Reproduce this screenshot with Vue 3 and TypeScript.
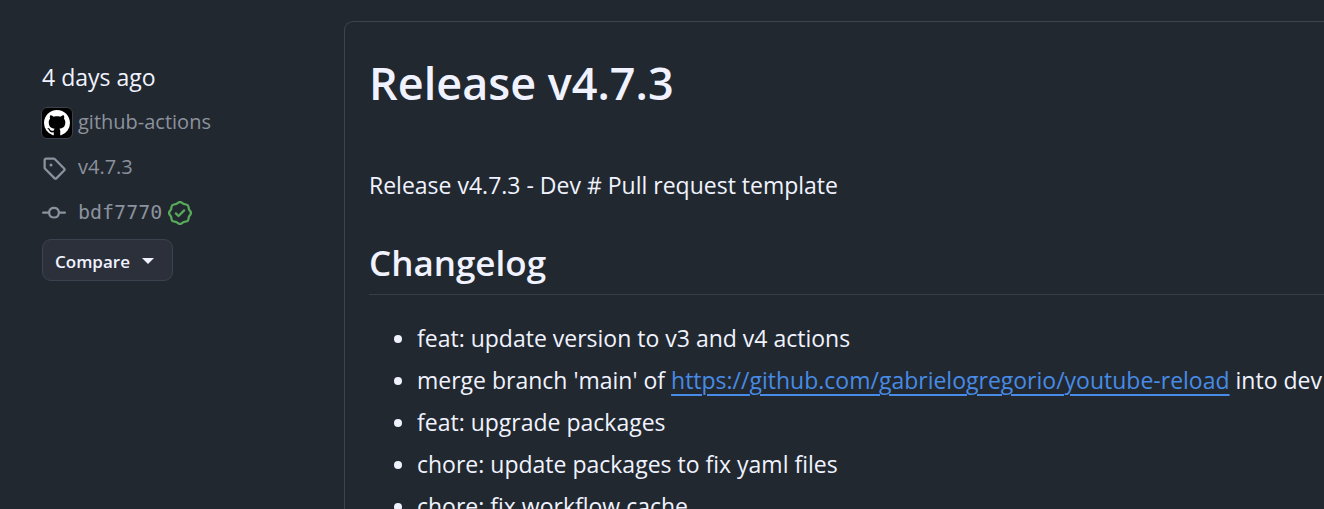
<script setup lang="ts">
interface Change {
  text: string
  link?: string
  after?: string
}

const changes: Change[] = [
  { text: 'feat: update version to v3 and v4 actions' },
  {
    text: "merge branch 'main' of ",
    link: 'https://github.com/gabrielogregorio/youtube-reload',
    after: ' into dev',
  },
  { text: 'feat: upgrade packages' },
  { text: 'chore: update packages to fix yaml files' },
  { text: 'chore: fix workflow cache' },
]
</script>

<template>
  <div class="page">
    <aside class="meta">
      <div class="row date">4 days ago</div>
      <a class="row" href="#author">
        <span class="avatar">
          <svg viewBox="0 0 16 16" width="26" height="26" aria-hidden="true">
            <path d="M8 0c4.42 0 8 3.58 8 8a8.013 8.013 0 0 1-5.45 7.59c-.4.08-.55-.17-.55-.38 0-.27.01-1.13.01-2.2 0-.75-.25-1.23-.54-1.48 1.78-.2 3.65-.88 3.65-3.95 0-.88-.31-1.59-.82-2.15.08-.2.36-1.02-.08-2.12 0 0-.67-.22-2.2.82-.64-.18-1.32-.27-2-.27-.68 0-1.36.09-2 .27-1.53-1.03-2.2-.82-2.2-.82-.44 1.1-.16 1.92-.08 2.12-.51.56-.82 1.28-.82 2.15 0 3.06 1.86 3.75 3.64 3.95-.23.2-.44.55-.51 1.07-.46.21-1.61.55-2.33-.66-.15-.24-.6-.83-1.23-.82-.67.01-.27.38.01.53.34.19.73.9.82 1.13.16.45.68 1.31 2.69.94 0 .67.01 1.3.01 1.49 0 .21-.15.45-.55.38A7.995 7.995 0 0 1 0 8c0-4.42 3.58-8 8-8Z" />
          </svg>
        </span>
        <span>github-actions</span>
      </a>
      <a class="row" href="#tag">
        <span class="icon">
          <svg viewBox="0 0 16 16" width="24" height="24" aria-hidden="true">
            <path d="M1 7.775V2.75C1 1.784 1.784 1 2.75 1h5.025c.464 0 .91.184 1.238.513l6.25 6.25a1.75 1.75 0 0 1 0 2.474l-5.026 5.026a1.75 1.75 0 0 1-2.474 0l-6.25-6.25A1.752 1.752 0 0 1 1 7.775Zm1.5 0c0 .066.026.13.073.177l6.25 6.25a.25.25 0 0 0 .354 0l5.025-5.025a.25.25 0 0 0 0-.354l-6.25-6.25a.25.25 0 0 0-.177-.073H2.75a.25.25 0 0 0-.25.25ZM6 5a1 1 0 1 1 0 2 1 1 0 0 1 0-2Z" />
          </svg>
        </span>
        <span>v4.7.3</span>
      </a>
      <div class="row">
        <a class="commit" href="#commit">
          <span class="icon">
            <svg viewBox="0 0 16 16" width="24" height="24" aria-hidden="true">
              <path d="M11.93 8.5a4.002 4.002 0 0 1-7.86 0H.75a.75.75 0 0 1 0-1.5h3.32a4.002 4.002 0 0 1 7.86 0h3.32a.75.75 0 0 1 0 1.5Zm-1.43-.75a2.5 2.5 0 1 0-5 0 2.5 2.5 0 0 0 5 0Z" />
            </svg>
          </span>
          <code>bdf7770</code>
        </a>
        <svg class="verified" viewBox="0 0 16 16" width="24" height="24" role="img" aria-label="Verified">
          <path d="m9.585.52.929.68c.153.112.331.186.518.215l1.138.175a2.678 2.678 0 0 1 2.24 2.24l.174 1.139c.029.187.103.365.215.518l.68.928a2.677 2.677 0 0 1 0 3.17l-.68.928a1.174 1.174 0 0 0-.215.518l-.175 1.138a2.678 2.678 0 0 1-2.241 2.241l-1.138.175a1.17 1.17 0 0 0-.518.215l-.928.68a2.677 2.677 0 0 1-3.17 0l-.928-.68a1.174 1.174 0 0 0-.518-.215L3.83 14.41a2.678 2.678 0 0 1-2.24-2.24l-.175-1.138a1.17 1.17 0 0 0-.215-.518l-.68-.928a2.677 2.677 0 0 1 0-3.17l.68-.928c.112-.153.186-.331.215-.518l.175-1.14a2.678 2.678 0 0 1 2.24-2.24l1.139-.175c.187-.029.365-.103.518-.215l.928-.68a2.677 2.677 0 0 1 3.17 0ZM7.303 1.728l-.927.68a2.67 2.67 0 0 1-1.18.489l-1.137.174a1.179 1.179 0 0 0-.987.987l-.174 1.136a2.677 2.677 0 0 1-.489 1.18l-.68.928a1.18 1.18 0 0 0 0 1.394l.68.927c.256.348.424.753.489 1.18l.174 1.137c.078.509.478.909.987.987l1.136.174a2.67 2.67 0 0 1 1.18.489l.928.68c.414.305.979.305 1.394 0l.927-.68a2.67 2.67 0 0 1 1.18-.489l1.137-.174a1.18 1.18 0 0 0 .987-.987l.174-1.136a2.67 2.67 0 0 1 .489-1.18l.68-.928a1.176 1.176 0 0 0 0-1.394l-.68-.927a2.686 2.686 0 0 1-.489-1.18l-.174-1.137a1.179 1.179 0 0 0-.987-.987l-1.136-.174a2.677 2.677 0 0 1-1.18-.489l-.928-.68a1.176 1.176 0 0 0-1.394 0ZM11.28 6.78l-3.75 3.75a.75.75 0 0 1-1.06 0L4.72 8.78a.751.751 0 0 1 .018-1.042.751.751 0 0 1 1.042-.018L7 8.94l3.22-3.22a.751.751 0 0 1 1.042.018.751.751 0 0 1 .018 1.042Z" />
        </svg>
      </div>
      <button class="compare" type="button">
        <span>Compare</span>
        <span class="caret"></span>
      </button>
    </aside>

    <main class="card">
      <h1>Release v4.7.3</h1>
      <p>Release v4.7.3 - Dev # Pull request template</p>
      <h2>Changelog</h2>
      <ul>
        <li v-for="change in changes" :key="change.text">
          {{ change.text }}<a v-if="change.link" :href="change.link">{{ change.link }}</a>{{ change.after }}
        </li>
      </ul>
    </main>
  </div>
</template>

<style>
body {
  margin: 0;
  background: #22282f;
}
</style>

<style scoped>
.page {
  box-sizing: border-box;
  display: grid;
  grid-template-columns: 302px minmax(0, 1fr);
  height: 100vh;
  overflow: hidden;
  padding: 21px 0 0 42px;
  background: #22282f;
  color: #f0f3ff;
  font-family: "Open Sans", "Noto Sans", sans-serif;
  font-size: 23px;
  line-height: 36px;
}

.meta {
  display: flex;
  flex-direction: column;
  align-items: flex-start;
  gap: 9px;
  padding-top: 38px;
  font-size: 20px;
}

.row {
  display: flex;
  align-items: center;
  height: 36px;
  color: #8b929e;
  text-decoration: none;
}

.date {
  color: #f0f3ff;
  font-size: 23px;
  line-height: 34px;
}

.icon,
.avatar {
  display: flex;
  box-sizing: border-box;
  width: 36px;
}

.row svg {
  fill: currentColor;
}

.icon,
.verified {
  margin-top: 2px;
}

.avatar {
  align-items: center;
  justify-content: center;
  width: 32px;
  height: 32px;
  margin: 2px 5px 0 -1px;
  border: 1px solid #3a414c;
  border-radius: 6px;
  background: #000;
  color: #fff;
}

.commit {
  display: flex;
  align-items: center;
  color: inherit;
  text-decoration: none;
}

code {
  font-family: "DejaVu Sans Mono", monospace;
  font-size: 20px;
}

.row .verified {
  margin-left: 6px;
  fill: #57ab5a;
}

.compare {
  display: flex;
  align-items: center;
  gap: 12px;
  height: 42px;
  padding: 2px 18px 0 12px;
  border: 1px solid #3d434e;
  border-radius: 9px;
  background: #2b303b;
  color: #f0f3ff;
  font: 600 17px "Open Sans", "Noto Sans", sans-serif;
}

.caret {
  border: 6px solid transparent;
  border-top-color: currentColor;
  border-bottom: 0;
}

.card {
  border: 1px solid #3d444d;
  border-right: 0;
  border-bottom: 0;
  border-radius: 9px 0 0 0;
  padding: 31px 0 0 24px;
  white-space: nowrap;
}

h1,
h2 {
  margin: 0;
  font-weight: 600;
}

h1 {
  font-size: 45px;
  line-height: 60px;
}

p {
  margin: 54px 0 37px;
}

h2 {
  padding-bottom: 9px;
  border-bottom: 1px solid #373e47;
  font-size: 35px;
  line-height: 45px;
}

ul {
  display: grid;
  gap: 6px;
  margin: 25px 0 0;
  padding-left: 48px;
}

li a {
  color: #478be6;
  text-decoration-thickness: 2px;
  text-underline-offset: 5px;
}
</style>
